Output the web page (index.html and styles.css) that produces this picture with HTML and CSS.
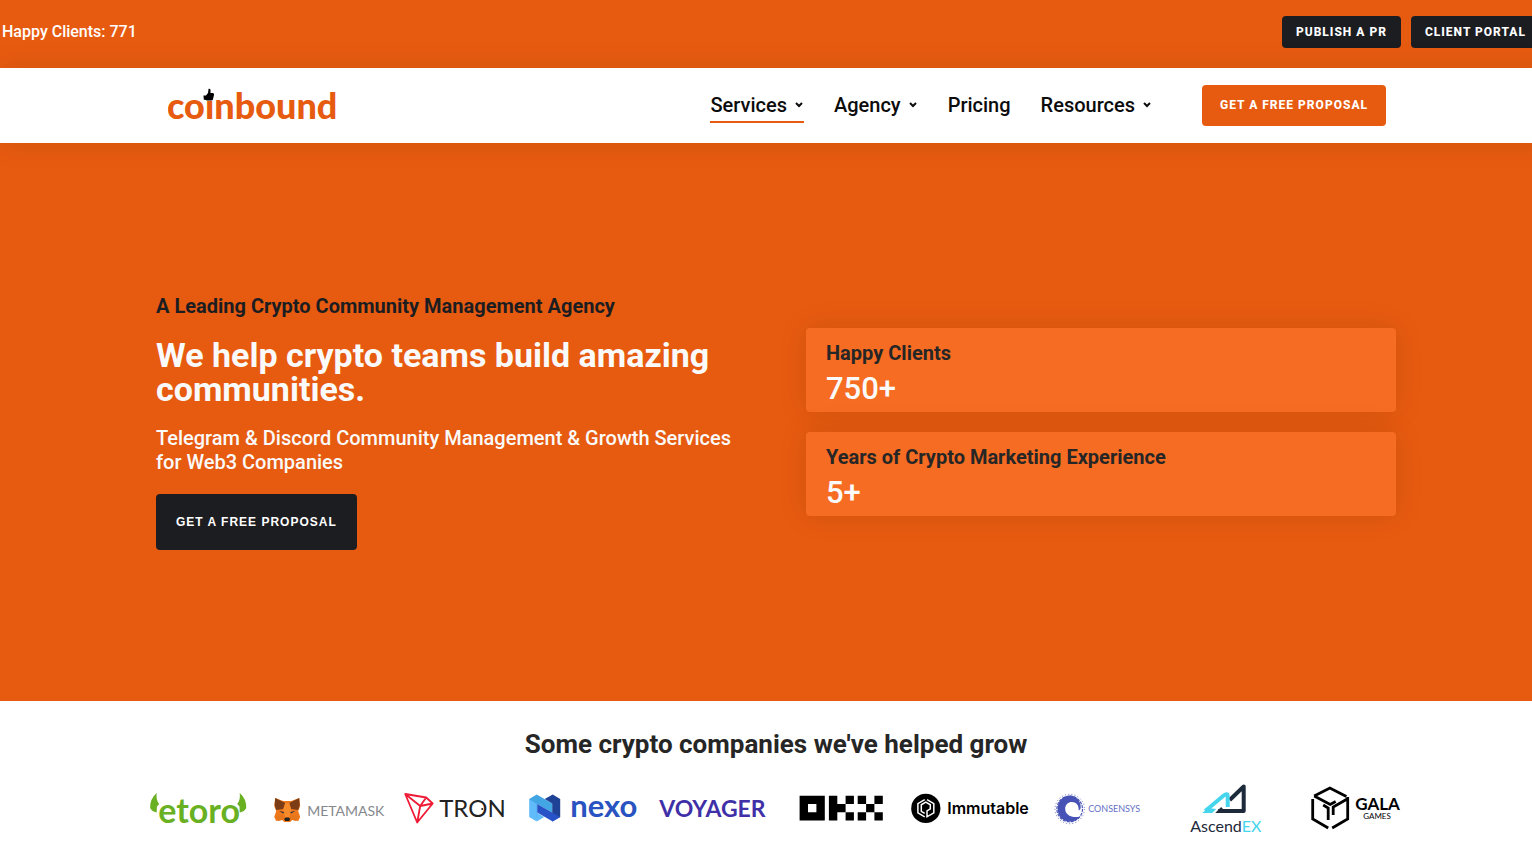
FILE: index.html
```html
<!DOCTYPE html>
<html lang="en">
<head>
<meta charset="utf-8">
<meta name="viewport" content="width=device-width, initial-scale=1">
<title>Coinbound – Crypto Community Management</title>
<link rel="stylesheet" href="styles.css">
</head>
<body>
<div class="page">
  <div class="topbar">
    <p class="topbar-text">Happy Clients: 771</p>
    <div class="topbar-actions">
      <a class="btn btn-small" href="#">PUBLISH A PR</a>
      <a class="btn btn-small" href="#">CLIENT PORTAL</a>
    </div>
  </div>

  <header class="header">
    <div class="header-inner">
      <a class="logo" href="#" aria-label="coinbound">
        <svg width="184" height="49" viewBox="0 -5 184 49">
          <text class="logo-word" x="-1" y="33">coinbound</text>
          <rect x="34" y="0" width="13" height="15" fill="#fff"/>
          <path d="M35.500 9.500h2.500l2-2.500.6-4.200q1.500-.6 1.900 1v3.200h2.500q1.400.3 1 2l-1.100 4.500q-.4 1-1.500 1h-4.400l-2.200-.8h-1z" fill="#000"/>
        </svg>
      </a>
      <nav class="nav">
        <a class="nav-link active" href="#">Services <svg class="chevron" viewBox="0 0 10 8"><path d="M2 2l3 3 3-3"/></svg></a>
        <a class="nav-link" href="#">Agency <svg class="chevron" viewBox="0 0 10 8"><path d="M2 2l3 3 3-3"/></svg></a>
        <a class="nav-link" href="#">Pricing</a>
        <a class="nav-link" href="#">Resources <svg class="chevron" viewBox="0 0 10 8"><path d="M2 2l3 3 3-3"/></svg></a>
      </nav>
      <a class="btn btn-orange" href="#">GET A FREE PROPOSAL</a>
    </div>
  </header>

  <main>
    <section class="hero">
      <div class="hero-inner">
        <div class="hero-copy">
          <p class="eyebrow">A Leading Crypto Community Management Agency</p>
          <h1>We help crypto teams build amazing communities.</h1>
          <p class="lead">Telegram &amp; Discord Community Management &amp; Growth Services for Web3 Companies</p>
          <a class="btn btn-large" href="#">GET A FREE PROPOSAL</a>
        </div>
        <div class="stats">
          <div class="stat"><h2>Happy Clients</h2><p>750+</p></div>
          <div class="stat"><h2>Years of Crypto Marketing Experience</h2><p>5+</p></div>
        </div>
      </div>
    </section>

    <section class="clients">
      <h2>Some crypto companies we've helped grow</h2>
      <div class="client-row">
        <svg class="client" viewBox="0 0 128 60">
          <g fill="#69b022"><path d="M22.500 13q-7 6-6.500 15 1.500 3.500 6.500 4.500l.2-6 2.300-2.500q-3.500-4-2.500-11zM105.500 13q7 6 6.500 15-1.500 3.500-6.500 4.500l-.2-6-2.300-2.500q3.500-4 2.500-11z"/></g>
          <text class="w-etoro" x="24" y="43">etoro</text>
        </svg>
        <svg class="client" viewBox="0 0 128 60">
          <path d="M13 18l8 3h8l8-3 1 8-2 5 2 6-2 4-6-1-2 2h-6l-2-2-6 1-2-4 2-6-2-5z" fill="#f0781c"/>
          <path d="M13 18l10 5-2 6-7 1-1.500-5zM37 18l-10 5 2 6 7 1 1.500-5z" fill="#7c3d16"/>
          <path d="M23 23h4l2 7-2 7h-4l-2-7z" fill="#f68b2b"/>
          <path d="M14 36l7-1 2 4-7 2zM36 36l-7-1-2 4 7 2z" fill="#e4761b"/>
          <path d="M17 31l5 1-1 1.500zM33 31l-5 1 1 1.500z" fill="#233447"/>
          <path d="M22 39l1.500-1.500h3L28 39l-1 2h-4z" fill="#222"/>
          <text class="w-metamask" x="45" y="36">METAMASK</text>
        </svg>
        <svg class="client" viewBox="0 0 128 60">
          <path d="M14 14l21 3.500 6.500 6L26 42.500zM14 14l15 12L41.500 23.500M29 26l6-8.500M29 26l-3 16.500" fill="none" stroke="#ef1a36" stroke-width="1.800" stroke-linejoin="round"/>
          <text class="w-tron" x="48" y="37">TRON</text>
          <circle cx="91" cy="29" r="1" fill="#222"/>
        </svg>
        <svg class="client" viewBox="0 0 128 60">
          <path d="M10 19l7.500-4.500L33 23.500v9L18 24v17.500z" fill="#42a5e4"/>
          <path d="M10 19l7.500 5v17.500L10 37z" fill="#60bbfb"/>
          <path d="M17.500 32.500l7.500 4.500-7.500 4.500z" fill="#60bbfb"/>
          <path d="M25.500 19l8-4.500L41 19v18l-8 4.500v-18z" fill="#1f4296"/>
          <path d="M18 24l23 13-7.500 4.500L18 32.500z" fill="#2853c8"/>
          <text class="w-nexo" x="51" y="37">nexo</text>
        </svg>
        <svg class="client" viewBox="0 0 128 60">
          <text class="w-voyager" x="11" y="37">VOYAGER</text>
        </svg>
        <svg class="client" viewBox="0 0 128 60" role="img" aria-label="OKX">
          <path fill-rule="evenodd" d="M23.400 15.700h25.200v24.900H23.400zM31.800 24v8.300h8.400V24z"/>
          <path d="M52.700 15.700h8.400V24h8.300v8.300h-8.300v8.300h-8.400zM69.400 15.700h8.300V24h-8.300zM69.400 32.300h8.300v8.300h-8.300zM81.500 15.700h8.400V24h-8.400zM98.200 15.700h8.400V24h-8.400zM89.900 24h8.300v8.300h-8.300zM81.500 32.300h8.400v8.300h-8.400zM98.200 32.300h8.400v8.300h-8.400z"/>
        </svg>
        <svg class="client" viewBox="0 0 128 60">
          <circle cx="21.600" cy="28.400" r="14.600"/>
          <g fill="none" stroke="#fff" stroke-width="1.500"><path d="M20.500 19.700l-6.800 3.900v9.200l6.800 4M22.800 19.700l6.800 3.900v9.200l-6.800 4v-6l3.300-2v-4l-4.500-2.600-4.500 2.600v6.500l3.400 2"/></g>
          <text class="w-immutable" x="43" y="34">Immutable</text>
        </svg>
        <svg class="client" viewBox="0 0 128 60">
          <g fill="none" stroke="#4a57b5"><circle cx="36.500" cy="29" r="14.700" stroke-width="1" stroke-dasharray="1.200 2" opacity=".7"/><circle cx="36.500" cy="29" r="12.800" stroke-width="1.200" stroke-dasharray="3 1"/></g>
          <path fill="#4652b5" d="M47.500 28c.5-7-5-13-11.500-12.500C29 16 24 22 24.500 30 25 37 30 41.500 37 41.500c4 0 8-2 10-5-7 2-15-1-15-7.500 0-7 8-9 12-4.500 1 1.200 1.500 3 1.500 6 1-.5 1.800-1.500 2-2.500z"/>
          <text class="w-consensys" x="55" y="32">CONSENSYS</text>
        </svg>
        <svg class="client" viewBox="0 0 128 60">
          <path d="M68.500 20L82.500 6.500V31H57" fill="none" stroke="#1d2a3c" stroke-width="4" stroke-linejoin="round"/>
          <path d="M54 33l6-6 5 6z" fill="#1d2a3c"/>
          <path d="M44 31L62.500 15.500q4-3 4 1V27" fill="none" stroke="#45d5ec" stroke-width="4"/>
          <path d="M41 33h10l4-4-8-1z" fill="#45d5ec"/>
          <text class="w-ascend" x="29" y="52">Ascend<tspan fill="#45d5ec">EX</tspan></text>
        </svg>
        <svg class="client" viewBox="0 0 128 60">
          <path d="M22.500 19v20l15.500 9M42 48l15.500-9V17M24 16l15.700-8 16.500 8.500M24 16l16 8.500 5.500-3M33 25l5 3v12M43 35v-8l14-8" fill="none" stroke="#000" stroke-width="2.800"/>
          <text class="w-gala" x="65" y="30">GALA</text>
          <text class="w-games" x="73" y="39">GAMES</text>
        </svg>
      </div>
    </section>
  </main>
</div>
</body>
</html>
```

FILE: styles.css
```css
* { box-sizing: border-box; }

body {
  margin: 0;
  overflow-x: hidden;
  font-family: Roboto, "Liberation Sans", sans-serif;
  font-weight: 500;
  color: #1c1d21;
  background: #fff;
}

h1, h2, p { margin: 0; }
a { color: inherit; text-decoration: none; }

/* content runs slightly wider than the window */
.page { width: calc(100% + 20px); }

.btn {
  display: inline-block;
  border-radius: 4px;
  background: #1c1d21;
  color: #fff;
  font-weight: 800;
  font-size: 12px;
  letter-spacing: 1px;
  text-align: center;
  white-space: nowrap;
}
.btn-small { padding: 0 14px; line-height: 32px; }
.btn-orange { padding: 0 18px; line-height: 41px; background: #e75b10; }
.btn-large { margin-top: 20px; padding: 0 20px; line-height: 56px; font-family: "Liberation Sans", Arial, sans-serif; }

.topbar {
  display: flex;
  justify-content: space-between;
  align-items: center;
  padding: 16px 12px 20px 2px;
  background: #e75b10;
  color: #fff;
}
.topbar-text { font-size: 16px; line-height: 32px; }
.topbar-actions { display: flex; gap: 10px; }

.header {
  position: relative;
  z-index: 1;
  background: #fff;
  box-shadow: 0 0 30px rgba(0, 0, 0, .1);
}
.header-inner {
  display: flex;
  align-items: center;
  max-width: 1240px;
  margin: 0 auto;
  padding: 13px 10px 13px 12px;
}
.logo { display: flex; }
.logo-word { font: 900 36px Lato, sans-serif; fill: #e75b10; }
.nav { display: flex; gap: 30px; margin-left: auto; margin-right: 50px; color: #0c0c0c; }
.nav-link {
  display: flex;
  align-items: center;
  gap: 7px;
  font-size: 20px;
  line-height: 32px;
  border-bottom: 2px solid transparent;
}
.nav-link.active { border-color: #e75b10; }
.chevron { width: 10px; height: 8px; fill: none; stroke: #0c0c0c; stroke-width: 2; }

.hero { padding: 151px 0; background: #e75b10; }
.hero-inner {
  display: grid;
  grid-template-columns: 1fr 1fr;
  align-items: center;
  gap: 60px;
  max-width: 1240px;
  margin: 0 auto;
}
.eyebrow { font-size: 20px; line-height: 24px; font-weight: 700; }
h1 { margin-top: 20px; font-size: 34px; line-height: 34px; font-weight: 700; color: #fafafa; }
.lead { margin-top: 20px; font-size: 20px; line-height: 24px; color: #fafafa; }

.stats { display: grid; gap: 20px; }
.stat {
  padding: 15px 20px 7px;
  border-radius: 4px;
  background: #f66c22;
  box-shadow: 0 0 30px rgba(0, 0, 0, .1);
}
.stat h2 { font-size: 20px; line-height: 20px; color: #262626; }
.stat p { margin-top: 10px; font-size: 31px; line-height: 32px; color: #fafafa; }

.clients { padding: 27px 0 14px; }
.clients h2 { font-size: 26px; line-height: 32px; text-align: center; color: #262626; }
.client-row {
  display: grid;
  grid-template-columns: repeat(10, 1fr);
  max-width: 1284px;
  margin: 20px auto 0;
}
.client { display: block; width: 100%; height: 60px; }
.client text { font-family: Lato, sans-serif; font-weight: 400; }
.client .w-etoro { font-size: 34px; font-weight: 700; fill: #69b022; }
.client .w-metamask { font-size: 14px; fill: #85888c; }
.client .w-tron { font-size: 24px; fill: #222; }
.client .w-nexo { font-size: 31px; font-weight: 700; fill: #2853c0; }
.client .w-voyager { font-size: 23px; font-weight: 700; fill: #3f30a8; }
.client .w-immutable { font-family: Inter, sans-serif; font-size: 16px; font-weight: 600; }
.client .w-consensys { font-size: 9px; fill: #6570c4; }
.client .w-ascend { font-size: 16px; fill: #1d2a3c; }
.client .w-gala { font-size: 17px; font-weight: 700; }
.client .w-games { font-size: 8px; }
```
